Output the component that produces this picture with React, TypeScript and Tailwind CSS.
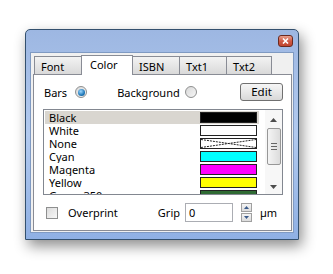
import React from "react";

const font = { fontFamily: '"Noto Sans", "Liberation Sans", sans-serif' };

const tabs = ["Font", "Color", "ISBN", "Txt1", "Txt2"];
const tabWidths: Record<string, string> = {
  Font: "w-[48px]",
  Color: "w-[52px]",
  ISBN: "w-[48px]",
  Txt1: "w-[48px]",
  Txt2: "w-[46px]",
};

const colors = [
  { name: "Black", swatch: "bg-black" },
  { name: "White", swatch: "bg-white" },
  { name: "None", swatch: "none" },
  { name: "Cyan", swatch: "bg-[#00ffff]" },
  { name: "Magenta", swatch: "bg-[#ff00ff]" },
  { name: "Yellow", swatch: "bg-[#ffff00]" },
  { name: "Green 350", swatch: "bg-[#2f6b33]" },
];

function Radio({ checked }: { checked?: boolean }) {
  return (
    <span className="grid size-[12px] place-items-center rounded-full border border-[#8e8f8f] bg-gradient-to-br from-[#d8d8d8] to-[#f6f6f6]">
      {checked ? (
        <span className="size-[7px] rounded-full bg-[radial-gradient(circle_at_40%_35%,#9fd8ff,#1f78b8_60%,#0d4d80)]" />
      ) : null}
    </span>
  );
}

function Swatch({ kind }: { kind: string }) {
  if (kind === "none") {
    return (
      <span className="block h-[11px] w-[57px] border border-[#222] bg-white">
        <svg width="55" height="9" viewBox="0 0 55 9" className="block">
          <path d="M0 0.5 L55 8.5 M0 8.5 L55 0.5" stroke="#222" strokeWidth="1" strokeDasharray="2 1" />
        </svg>
      </span>
    );
  }
  return <span className={`block h-[11px] w-[57px] border border-[#222] ${kind}`} />;
}

export default function App() {
  return (
    <div className="min-h-[274px] w-[333px] bg-white pl-[25px] pt-[29px]" style={font}>
      <div className="flex h-[211px] w-[274px] flex-col rounded-t-[5px] border border-[#33506e] bg-gradient-to-b from-[#9db7e2] via-[#b2caef] to-[#8fb0e4] px-[4px] pb-[6px] shadow-[3px_6px_14px_rgba(0,0,0,0.45)]">
        {/* title bar */}
        <div className="flex h-[22px] shrink-0 items-start justify-end pr-[1px] pt-[5px]">
          <button
            type="button"
            className="grid h-[12px] w-[15px] place-items-center rounded-[3px] border border-[#6b2a20] bg-gradient-to-b from-[#e8a190] via-[#cf5a45] to-[#c0452e]"
            aria-label="Close"
          >
            <svg width="7" height="6" viewBox="0 0 7 6">
              <path d="M1 0.5 L6 5.5 M6 0.5 L1 5.5" stroke="white" strokeWidth="1.6" />
            </svg>
          </button>
        </div>

        {/* client */}
        <div className="flex flex-1 flex-col border border-[#7f9ac2] bg-[#f0f0f0] pb-[1px] pl-[2px] pr-[1px] pt-[2px]">
          <div className="flex h-[19px] items-end pl-[2px]">
            {tabs.map((t) => {
              const active = t === "Color";
              return (
                <div
                  key={t}
                  className={`${tabWidths[t]} -ml-px flex items-center border border-b-0 border-[#898c95] pl-[6px] text-[11px] leading-[13px] text-black ${
                    active
                      ? "relative z-10 -mb-px h-[20px] bg-white pb-[3px] pl-[8px]"
                      : "h-[18px] bg-gradient-to-b from-[#f3f3f3] to-[#d9d9d9] pt-[2px]"
                  }`}
                >
                  {t}
                </div>
              );
            })}
          </div>

          <div className="flex flex-1 flex-col border border-[#898c95] bg-white pl-[9px] pr-[8px] text-[11px] leading-[13px] text-black">
            {/* first row */}
            <div className="mt-[8px] flex h-[18px] items-center">
              <span className="ml-px">Bars</span>
              <span className="ml-[8px]">
                <Radio checked />
              </span>
              <span className="ml-[30px]">Background</span>
              <span className="ml-[5px]">
                <Radio />
              </span>
              <button
                type="button"
                className="ml-auto h-[18px] w-[43px] rounded-[3px] border border-[#707070] bg-gradient-to-b from-[#f6f6f6] via-[#e8e8e8] to-[#d8d8d8] text-[11.5px] leading-none"
              >
                Edit
              </button>
            </div>

            {/* list */}
            <div className="mt-[8px] flex h-[86px] border border-[#828790] bg-white">
              <div className="flex-1 overflow-hidden pl-px pr-[6px] pt-px">
                {colors.map((c, i) => (
                  <div
                    key={c.name}
                    className={`flex h-[13px] items-center overflow-hidden pl-[4px] pr-[2px] leading-[13px] ${i === 0 ? "bg-[#d9d6d0]" : ""}`}
                  >
                    <span className="flex-1">{c.name}</span>
                    <Swatch kind={c.swatch} />
                  </div>
                ))}
              </div>
              <div className="flex w-[17px] flex-col items-center bg-[#f7f7f7] py-[5px]">
                <svg width="7" height="4" viewBox="0 0 7 4" className="mt-[3px]">
                  <path d="M0 4 L3.5 0 L7 4 Z" fill="#4d4d4d" />
                </svg>
                <div className="mt-[6px] flex h-[37px] w-[14px] flex-col items-center justify-center gap-[2px] rounded-[2px] border border-[#979797] bg-gradient-to-r from-[#f4f4f4] to-[#dcdcdc]">
                  <span className="h-px w-[6px] bg-[#666]" />
                  <span className="h-px w-[6px] bg-[#666]" />
                  <span className="h-px w-[6px] bg-[#666]" />
                </div>
                <svg width="7" height="4" viewBox="0 0 7 4" className="mt-auto">
                  <path d="M0 0 L3.5 4 L7 0 Z" fill="#4d4d4d" />
                </svg>
              </div>
            </div>

            {/* bottom row */}
            <div className="mt-[8px] flex h-[19px] items-center">
              <span className="ml-[3px] size-[12px] border border-[#8e8f8f] bg-gradient-to-br from-[#dcdcdc] to-[#f8f8f8]" />
              <span className="ml-[10px]">Overprint</span>
              <span className="ml-[40px]">Grip</span>
              <div className="ml-[5px] flex h-[19px] w-[48px] items-center border border-[#abadb3] bg-white pl-[3px]">
                0
              </div>
              <div className="ml-[8px] flex h-[19px] flex-col justify-between">
                <span className="grid h-[9px] w-[11px] place-items-center border border-[#a0a0a0] bg-gradient-to-b from-[#f4f4f4] to-[#dcdcdc]">
                  <svg width="5" height="3" viewBox="0 0 5 3">
                    <path d="M0 3 L2.5 0 L5 3 Z" fill="#3a5a8a" />
                  </svg>
                </span>
                <span className="grid h-[9px] w-[11px] place-items-center border border-[#a0a0a0] bg-gradient-to-b from-[#f4f4f4] to-[#dcdcdc]">
                  <svg width="5" height="3" viewBox="0 0 5 3">
                    <path d="M0 0 L2.5 3 L5 0 Z" fill="#3a5a8a" />
                  </svg>
                </span>
              </div>
              <span className="ml-[8px]">µm</span>
            </div>
          </div>
        </div>
      </div>
    </div>
  );
}
